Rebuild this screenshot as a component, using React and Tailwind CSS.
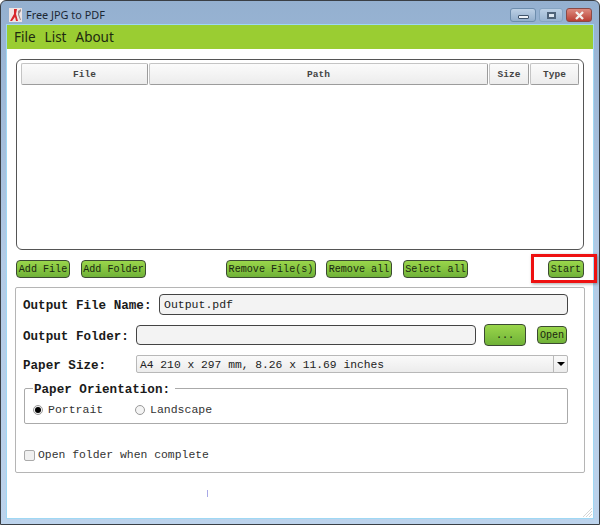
const mono = "font-['Liberation_Mono',monospace]";

const GreenButton = ({ children, className = "" }) => (
  <button
    className={`flex items-center justify-center whitespace-nowrap pt-[3px] border border-[#3b4a32] rounded-[4px] bg-gradient-to-b from-[#9ad64b] to-[#70b238] text-[#1a2710] text-[10.1px] leading-none ${mono} ${className}`}
  >
    {children}
  </button>
);

const HeaderCell = ({ children, className = "" }) => (
  <div
    className={`flex items-center justify-center h-full pt-[2px] border border-[#c4c4c4] border-r-[#9c9c9c] border-b-[#9c9c9c] rounded-[2px] bg-gradient-to-b from-[#fbfbfb] to-[#ececec] text-[9.5px] font-bold text-[#444] ${mono} ${className}`}
  >
    {children}
  </div>
);

const Label = ({ children, className = "" }) => (
  <span className={`text-[12.6px] leading-none font-bold text-[#1a1a1a] ${mono} ${className}`}>
    {children}
  </span>
);

const App = () => {
  return (
    <div className="relative flex flex-col w-[600px] h-[525px] overflow-hidden rounded-t-[6px] border border-[#3a3f45] bg-gradient-to-b from-[#94b0d0] via-[#b3cbe6] to-[#bcd3ec]">
      {/* title bar */}
      <div className="flex items-center h-[24px] shrink-0 pt-[4px] pl-[8px] pr-[7px]">
        <svg width="13" height="14" viewBox="0 0 13 14">
          <rect width="13" height="14" fill="#eee4e4" />
          <path d="M1 13 L5 6 L5 1 L8 1 L7 6 L9 13 L7 13 L6 9 L3 13 Z" fill="#d8262b" />
          <path d="M9 3 L12 1 L12 3 L10 6 L12 12 L11 12 L9 7 Z" fill="#9a8a8a" />
        </svg>
        <span className="ml-[4px] mt-px text-[10.9px] text-[#1b2733] font-['Noto_Sans',sans-serif]">Free JPG to PDF</span>
        <div className="ml-auto flex items-center gap-[3px]">
          <div className="flex items-center justify-center w-[26px] h-[14px] rounded-[3px] border border-[#6d8dad] bg-gradient-to-b from-[#bcd0e5] to-[#94afcc]">
            <div className="w-[11px] h-[4px] mt-[3px] bg-[#eef3f8] border border-[#41556b] rounded-[1px]" />
          </div>
          <div className="flex items-center justify-center w-[24px] h-[14px] rounded-[3px] border border-[#86a4c2] bg-gradient-to-b from-[#bcd0e5] to-[#9ab4d0]">
            <div className="w-[9px] h-[7px] border-2 border-[#4f6379] bg-[#dfe8f1]" />
          </div>
          <div className="flex items-center justify-center w-[26px] h-[14px] rounded-[3px] border border-[#8a4a46] bg-gradient-to-b from-[#dd8a7f] to-[#b93f35]">
            <svg width="11" height="9" viewBox="0 0 11 9">
              <path d="M2 1 L9 8 M9 1 L2 8" stroke="#f4f0ee" strokeWidth="2.4" />
            </svg>
          </div>
        </div>
      </div>

      {/* client area */}
      <div className="flex flex-col flex-1 mx-[6px] mb-[6px] bg-white shadow-[0_0_0_1px_#9fd8f4]">
        <div className="flex items-center h-[24px] shrink-0 bg-[#9acd32] pl-[7px] gap-[9px] text-[13.5px] text-[#1e2a10] font-['Noto_Sans',sans-serif]">
          <span>File</span>
          <span>List</span>
          <span>About</span>
        </div>

        {/* file list */}
        <div className="ml-[9px] mt-[10px] w-[568px] h-[191px] shrink-0 border border-[#555] rounded-[6px] pt-[3px] px-[4px]">
          <div className="flex h-[22px] gap-[1px]">
            <HeaderCell className="w-[127px]">File</HeaderCell>
            <HeaderCell className="w-[339px]">Path</HeaderCell>
            <HeaderCell className="w-[40px]">Size</HeaderCell>
            <HeaderCell className="w-[49px]">Type</HeaderCell>
          </div>
        </div>

        {/* buttons */}
        <div className="flex h-[18px] shrink-0 ml-[9px] mt-[10px] w-[568px]">
          <GreenButton className="w-[54px]">Add File</GreenButton>
          <GreenButton className="w-[65px] ml-[11px]">Add Folder</GreenButton>
          <GreenButton className="w-[90px] ml-[80px]">Remove File(s)</GreenButton>
          <GreenButton className="w-[66px] ml-[10px]">Remove all</GreenButton>
          <GreenButton className="w-[65px] ml-[11px]">Select all</GreenButton>
          <GreenButton className="w-[36px] ml-auto">Start</GreenButton>
        </div>

        {/* options panel */}
        <div className="ml-[8px] mt-[9px] w-[570px] h-[186px] shrink-0 border border-[#b5b5b5] rounded-[2px] pl-[7px] pr-[16px] pt-[6px]">
          <div className="flex items-center h-[21px]">
            <Label className="w-[136px] pt-[3px]">Output File Name:</Label>
            <div className={`flex items-center flex-1 h-full pl-[4px] pt-[1px] border border-[#444] rounded-[4px] bg-[#f3f3f3] text-[11.5px] text-[#222] ${mono}`}>
              Output.pdf
            </div>
          </div>
          <div className="flex items-center h-[22px] mt-[9px]">
            <Label className="w-[113px] pt-[5px]">Output Folder:</Label>
            <div className="w-[340px] h-[20px] border border-[#444] rounded-[4px] bg-[#f3f3f3]" />
            <GreenButton className="w-[42px] h-[22px] ml-[8px]">...</GreenButton>
            <GreenButton className="w-[30px] h-[18px] ml-[11px]">Open</GreenButton>
          </div>
          <div className="flex items-center h-[18px] mt-[9px]">
            <Label className="w-[113px] pt-[5px]">Paper Size:</Label>
            <div className={`flex items-center flex-1 h-full pl-[3px] border border-[#b8b8b8] rounded-[2px] bg-gradient-to-b from-[#fafafa] to-[#ececec] text-[11.3px] text-[#222] ${mono}`}>
              <span className="pt-[2px]">A4 210 x 297 mm, 8.26 x 11.69 inches</span>
              <div className="ml-auto flex items-center justify-center w-[14px] h-full border-l border-[#b8b8b8]">
                <div className="w-0 h-0 border-x-[4px] border-x-transparent border-t-[4px] border-t-black" />
              </div>
            </div>
          </div>
          <fieldset className="mt-[8px] ml-px h-[43px] border border-[#aaa] rounded-[2px] pl-[8px]">
            <legend className="pl-[1px] pr-[5px]">
              <Label className="block h-[14px] pt-[3px] leading-[14px]">Paper Orientation:</Label>
            </legend>
            <div className={`flex items-center h-[16px] mt-[7px] text-[11.5px] text-[#333] ${mono}`}>
              <div className="flex items-center justify-center w-[10px] h-[10px] rounded-full border border-[#999] bg-[#f4f4f4]">
                <div className="w-[6px] h-[6px] rounded-full bg-black" />
              </div>
              <span className="ml-[5px] w-[87px]">Portrait</span>
              <div className="w-[10px] h-[10px] rounded-full border border-[#999] bg-[#f4f4f4]" />
              <span className="ml-[5px]">Landscape</span>
            </div>
          </fieldset>
          <div className={`flex items-center h-[14px] mt-[24px] ml-px text-[11.4px] text-[#333] ${mono}`}>
            <div className="w-[11px] h-[11px] rounded-[2px] border border-[#aaa] bg-[#f0f0f0]" />
            <span className="ml-[3px] pt-[2px]">Open folder when complete</span>
          </div>
        </div>

        {/* status strip */}
        <div className="relative flex-1 pl-[200px] pt-[17px]">
          <div className="w-px h-[7px] bg-[#a9a9e6]" />
          <svg width="11" height="11" viewBox="0 0 11 11" className="absolute right-0 bottom-0">
            <path d="M10 1 L1 10 M10 4 L4 10 M10 7 L7 10" stroke="#d6d6d6" strokeWidth="1" />
          </svg>
        </div>
      </div>

      {/* highlight round the Start button */}
      <div className="absolute left-[530px] top-[253px] w-[66px] h-[29px] border-[3px] border-[#ee1111] shadow-[1px_1px_3px_rgba(0,0,0,0.35)]" />
    </div>
  );
};

export default App;
